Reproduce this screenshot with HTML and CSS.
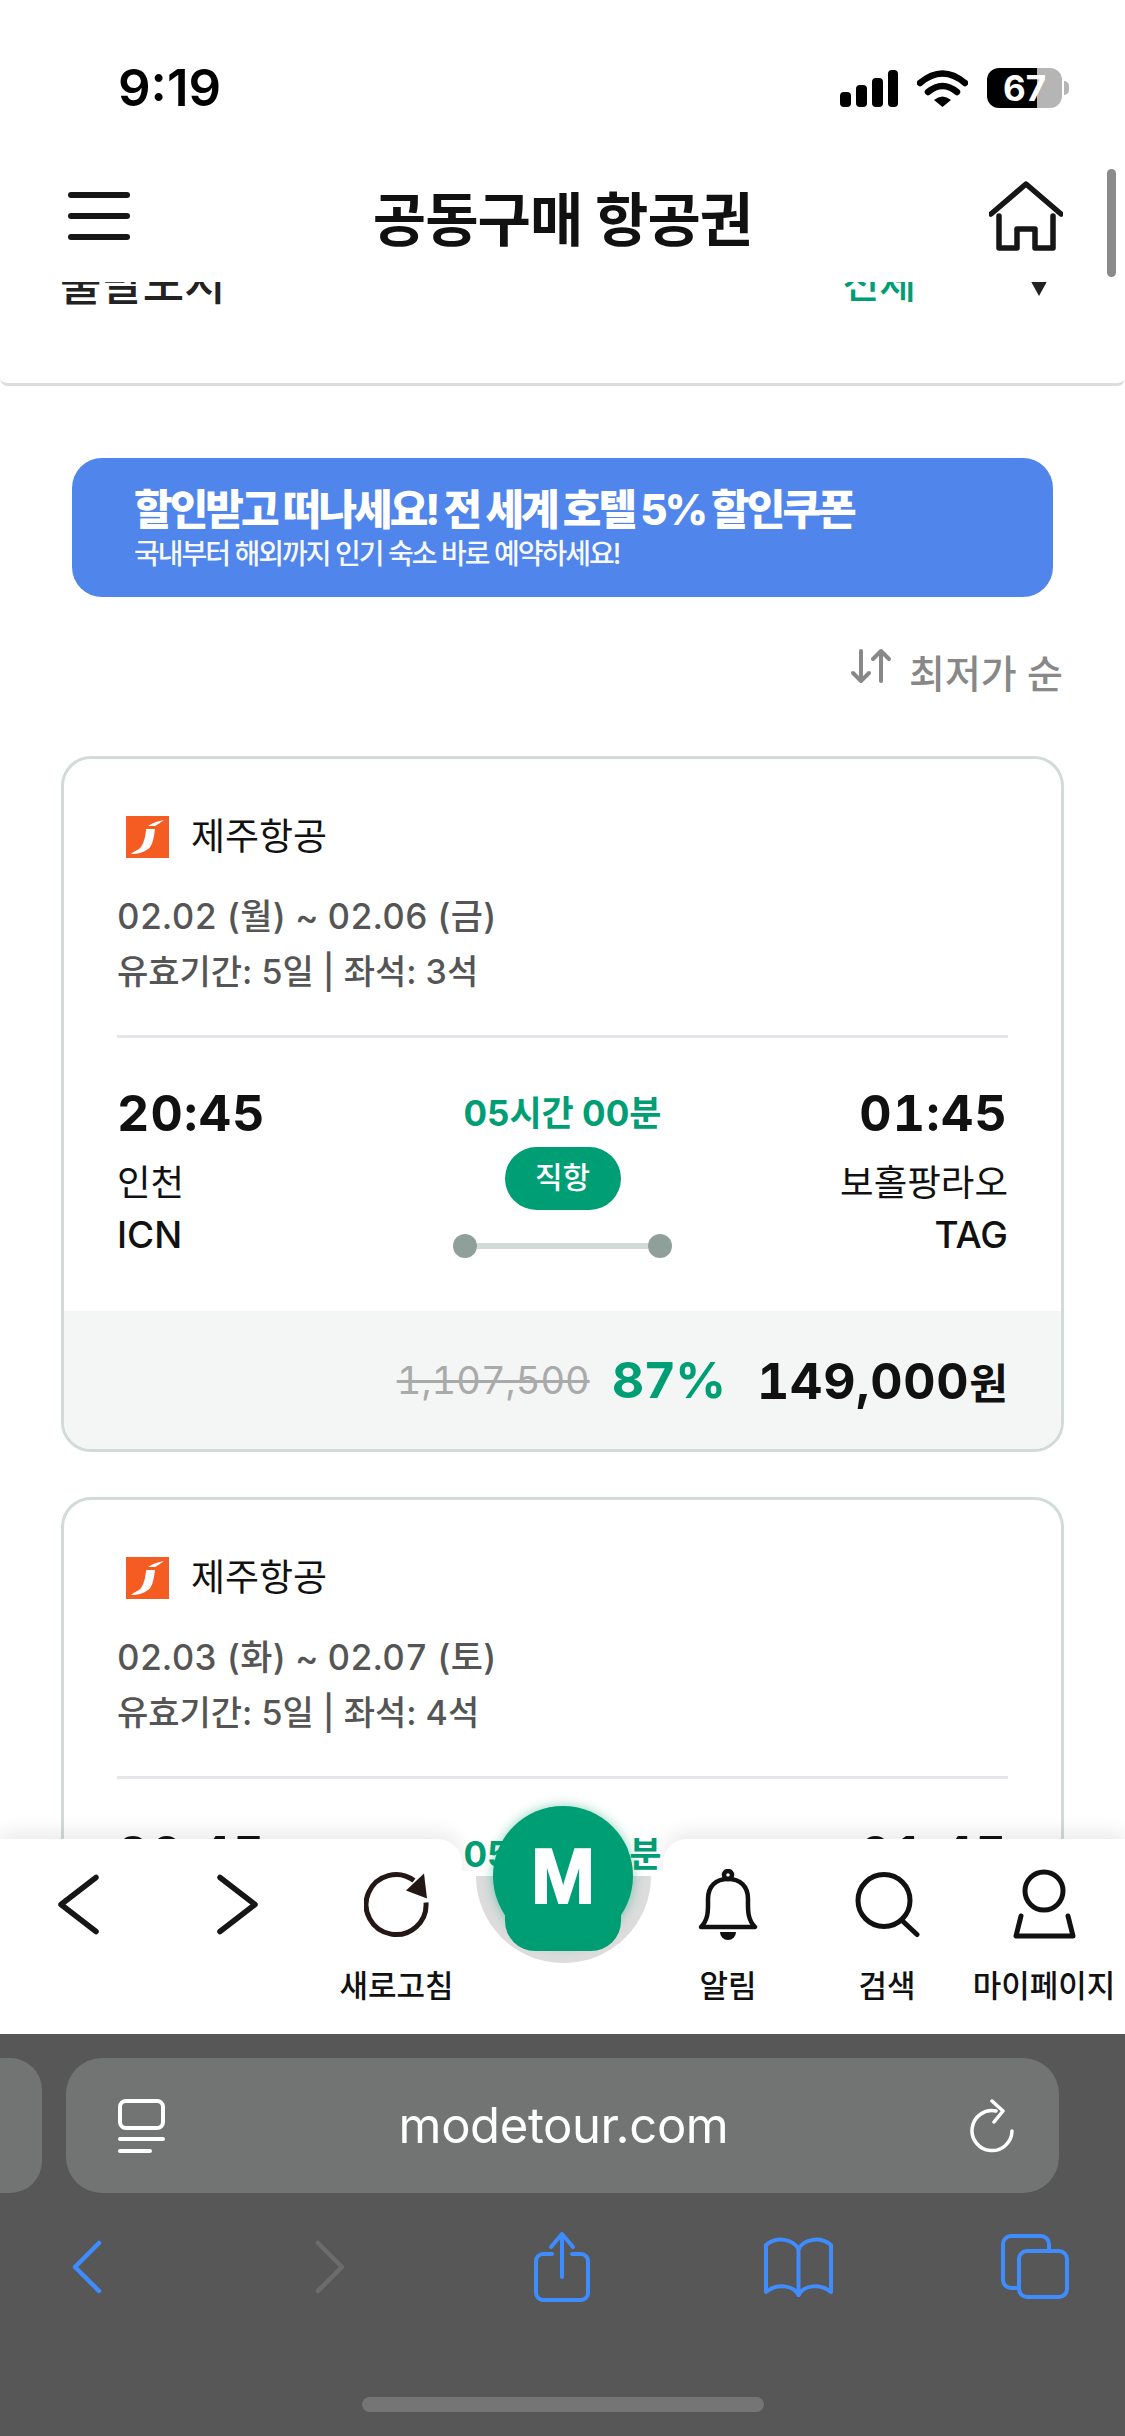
FILE: index.html
```html
<!DOCTYPE html>
<html lang="ko">
<head>
    <meta charset="UTF-8">
    <meta name="viewport" content="width=device-width, initial-scale=1.0">
    <title>공동구매 항공권</title>
    <link rel="stylesheet" href="styles.css">
</head>
<body>
    <div class="screen">
        <div class="page">
            <div class="top-block">
                <!-- Status bar -->
                <div class="status">
                    <span class="status-time">9:19</span>
                    <div class="status-icons">
                        <svg class="signal" width="58" height="37" viewBox="0 0 58 37">
                            <rect x="0" y="22" width="11" height="15" rx="4"/>
                            <rect x="16" y="15" width="11" height="22" rx="4"/>
                            <rect x="32" y="8" width="11" height="29" rx="4"/>
                            <rect x="48" y="0" width="10" height="37" rx="4"/>
                        </svg>
                        <svg class="wifi" width="51" height="37" viewBox="0 0 51 37">
                            <path d="M3 13 Q25.5 -6 48 13" fill="none" stroke="#000" stroke-width="6.5" stroke-linecap="round"/>
                            <path d="M11 22 Q25.5 10 40 22" fill="none" stroke="#000" stroke-width="6.5" stroke-linecap="round"/>
                            <path d="M17 30 Q25.5 23 34 30 L25.5 37 Z"/>
                        </svg>
                        <div class="battery"><span>67</span></div>
                        <div class="battery-cap"></div>
                    </div>
                </div>

                <!-- Header -->
                <header class="header">
                    <div class="burger"><span></span><span></span><span></span></div>
                    <h1>공동구매 항공권</h1>
                    <svg class="home" width="74" height="70" viewBox="0 0 74 70" fill="none" stroke="#161616" stroke-width="5.5" stroke-linecap="round" stroke-linejoin="round">
                        <path d="M2 33 L37 3 L72 33"/>
                        <path d="M10 35 V67 H28 V48 H46 V67 H64 V35"/>
                    </svg>
                </header>

                <!-- Filter row, scrolled mostly under the header -->
                <div class="filter">
                    <div class="filter-row">
                        <span class="filter-label">출발도시</span>
                        <span class="filter-value">전체</span>
                        <span class="filter-arrow"></span>
                    </div>
                </div>
            </div>

            <div class="banner">
                <div class="banner-title">할인받고 떠나세요! 전 세계 호텔 5% 할인쿠폰</div>
                <div class="banner-sub">국내부터 해외까지 인기 숙소 바로 예약하세요!</div>
            </div>

            <div class="sort">
                <svg width="42" height="36" viewBox="0 0 42 36" fill="none" stroke="#888" stroke-width="4" stroke-linecap="round" stroke-linejoin="round">
                    <path d="M11 3 V33 M3 25 L11 33 L19 25"/>
                    <path d="M31 33 V3 M23 11 L31 3 L39 11"/>
                </svg>
                <span>최저가 순</span>
            </div>

            <div class="card">
                <div class="card-info">
                    <div class="airline">
                        <svg class="logo" width="43" height="42" viewBox="0 0 43 42">
                            <rect width="43" height="42" fill="#f55c22"/>
                            <path d="M22 10 C26 7 32 5 38 4 C34 7 31 9 29 10 Z" fill="#fff"/>
                            <path d="M20 13 H29 C28 22 26 31 22 33 C17 37 11 38 5 38 C8 35 13 34 15 31 C18 27 20 18 20 13 Z" fill="#fff"/>
                        </svg>
                        <span>제주항공</span>
                    </div>
                    <div class="date">02.02 (월) ~ 02.06 (금)</div>
                    <div class="valid">유효기간: 5일 | 좌석: 3석</div>
                    <div class="divider"></div>
                    <div class="flight">
                        <div class="side">
                            <div class="time">20:45</div>
                            <div class="city">인천</div>
                            <div class="code">ICN</div>
                        </div>
                        <div class="middle">
                            <div class="duration">05시간 00분</div>
                            <div class="pill">직항</div>
                            <div class="route"><i></i><b></b><i></i></div>
                        </div>
                        <div class="side right">
                            <div class="time">01:45</div>
                            <div class="city">보홀팡라오</div>
                            <div class="code">TAG</div>
                        </div>
                    </div>
                </div>
                <div class="price">
                    <span class="old">1,107,500</span>
                    <span class="rate">87%</span>
                    <span class="now">149,000<small>원</small></span>
                </div>
            </div>

            <div class="card">
                <div class="card-info">
                    <div class="airline">
                        <svg class="logo" width="43" height="42" viewBox="0 0 43 42">
                            <rect width="43" height="42" fill="#f55c22"/>
                            <path d="M22 10 C26 7 32 5 38 4 C34 7 31 9 29 10 Z" fill="#fff"/>
                            <path d="M20 13 H29 C28 22 26 31 22 33 C17 37 11 38 5 38 C8 35 13 34 15 31 C18 27 20 18 20 13 Z" fill="#fff"/>
                        </svg>
                        <span>제주항공</span>
                    </div>
                    <div class="date">02.03 (화) ~ 02.07 (토)</div>
                    <div class="valid">유효기간: 5일 | 좌석: 4석</div>
                    <div class="divider"></div>
                    <div class="flight">
                        <div class="side">
                            <div class="time">20:45</div>
                        </div>
                        <div class="middle">
                            <div class="duration">05시간 00분</div>
                        </div>
                        <div class="side right">
                            <div class="time">01:45</div>
                        </div>
                    </div>
                </div>
            </div>

            <div class="scrollbar"></div>

            <!-- Bottom navigation, floats over the list -->
            <nav class="nav">
                <div class="nav-bg">
                    <div class="nav-panel left"></div>
                    <div class="nav-gap"></div>
                    <div class="nav-panel right"></div>
                </div>
                <div class="nav-items">
                    <div class="nav-item">
                        <svg width="41" height="60" viewBox="0 0 41 60" fill="none" stroke="#161616" stroke-width="5.5" stroke-linecap="round" stroke-linejoin="round"><path d="M38 3 L3 30 L38 57"/></svg>
                    </div>
                    <div class="nav-item">
                        <svg width="41" height="60" viewBox="0 0 41 60" fill="none" stroke="#161616" stroke-width="5.5" stroke-linecap="round" stroke-linejoin="round"><path d="M3 3 L38 30 L3 57"/></svg>
                    </div>
                    <div class="nav-item">
                        <svg width="65" height="66" viewBox="0 0 65 66" fill="none">
                            <path d="M62 31 A30 30 0 1 1 50 9" stroke="#231815" stroke-width="5"/>
                            <path d="M42 19 L60 2 L63 27 Z" fill="#231815"/>
                        </svg>
                        <span>새로고침</span>
                    </div>
                    <div class="nav-main">
                        <div class="nav-ring"></div>
                        <div class="nav-tail"></div>
                        <div class="nav-circle">M</div>
                    </div>
                    <div class="nav-item">
                        <svg width="60" height="71" viewBox="0 0 60 71" fill="none" stroke="#111" stroke-width="4.5" stroke-linejoin="round">
                            <circle cx="30" cy="6" r="4"/>
                            <path d="M3 58 C11 50 10 40 10 30 C10 17 18 10 30 10 C42 10 50 17 50 30 C50 40 49 50 57 58 Z"/>
                            <path d="M22 63 A8 8 0 0 0 38 63 Z" fill="#111" stroke="none"/>
                        </svg>
                        <span>알림</span>
                    </div>
                    <div class="nav-item">
                        <svg width="65" height="66" viewBox="0 0 65 66" fill="none" stroke="#111" stroke-width="5" stroke-linecap="round">
                            <circle cx="29" cy="29" r="26"/>
                            <path d="M47 49 L62 63"/>
                        </svg>
                        <span>검색</span>
                    </div>
                    <div class="nav-item">
                        <svg width="65" height="71" viewBox="0 0 65 71" fill="none" stroke="#111" stroke-width="5" stroke-linejoin="round" stroke-linecap="round">
                            <circle cx="32" cy="22" r="19"/>
                            <path d="M9 47 L4 67 H61 L56 47"/>
                        </svg>
                        <span>마이페이지</span>
                    </div>
                </div>
            </nav>
        </div>

        <!-- Safari chrome -->
        <div class="chrome">
            <div class="url-row">
                <div class="tab-peek"></div>
                <div class="url-bar">
                    <svg width="47" height="54" viewBox="0 0 47 54" fill="none" stroke="#fff" stroke-width="4" stroke-linecap="round">
                        <rect x="2" y="2" width="43" height="27" rx="6"/>
                        <path d="M2 40 H45 M2 52 H32"/>
                    </svg>
                    <span class="url-text">modetour.com</span>
                    <svg width="45" height="54" viewBox="0 0 45 54" fill="none" stroke="#fff" stroke-width="3.5" stroke-linecap="round" stroke-linejoin="round">
                        <path d="M26 12 A20 20 0 1 0 42 32"/>
                        <path d="M22 2 L33 12 L24 23"/>
                    </svg>
                </div>
            </div>
            <div class="tool-row">
                <svg width="30" height="54" viewBox="0 0 30 54" fill="none" stroke="#3f8cff" stroke-width="4.5" stroke-linecap="round" stroke-linejoin="round"><path d="M27 3 L3 27 L27 51"/></svg>
                <svg width="32" height="54" viewBox="0 0 32 54" fill="none" stroke="#6c6c6c" stroke-width="4.5" stroke-linecap="round" stroke-linejoin="round"><path d="M4 3 L28 27 L4 51"/></svg>
                <svg width="56" height="71" viewBox="0 0 56 71" fill="none" stroke="#3f8cff" stroke-width="4" stroke-linecap="round" stroke-linejoin="round">
                    <path d="M18 23 H9 A7 7 0 0 0 2 30 V62 A7 7 0 0 0 9 69 H47 A7 7 0 0 0 54 62 V30 A7 7 0 0 0 47 23 H38"/>
                    <path d="M28 46 V3 M17 16 L28 3 L39 16"/>
                </svg>
                <svg width="71" height="60" viewBox="0 0 71 60" fill="none" stroke="#3f8cff" stroke-width="4" stroke-linecap="round" stroke-linejoin="round">
                    <path d="M35.5 12 C30 2 14 -1 3 8 V55 C14 46 30 48 35.5 58 C41 48 57 46 68 55 V8 C57 -1 41 2 35.5 12 Z"/>
                    <path d="M35.5 12 V58"/>
                </svg>
                <svg width="68" height="65" viewBox="0 0 68 65" fill="none" stroke="#3f8cff" stroke-width="4" stroke-linejoin="round">
                    <path d="M17 54 H10 A8 8 0 0 1 2 46 V10 A8 8 0 0 1 10 2 H40 A8 8 0 0 1 48 10 V16"/>
                    <rect x="18" y="17" width="48" height="46" rx="8"/>
                </svg>
            </div>
            <div class="home-bar"></div>
        </div>
    </div>
</body>
</html>
```

FILE: styles.css
```css
/* Reset */
body, h1 {
    margin: 0;
    padding: 0;
}

body {
    width: 1125px;
    height: 2436px;
    overflow: hidden;
    background-color: #fff;
    color: #111;
    font-family: Inter, "Noto Sans CJK KR", sans-serif;
}

.screen {
    display: flex;
    flex-direction: column;
    height: 2436px;
}

.page {
    position: relative;
    height: 2034px;
    overflow: hidden;
    background-color: #fff;
}

/* Top block: status bar, header, clipped filter */
.top-block {
    height: 383px;
    background-color: #fff;
    border-bottom: 3px solid #dcdcdc;
    border-radius: 0 0 8px 8px;
}

.status {
    display: flex;
    justify-content: space-between;
    align-items: center;
    height: 40px;
    padding: 68px 56px 0 118px;
}

.status-time {
    font-size: 51px;
    font-weight: 600;
    line-height: 40px;
    color: #000;
}

.status-icons {
    display: flex;
    align-items: center;
}

.signal {
    margin-right: 19px;
}

.wifi {
    margin-right: 19px;
}

.battery {
    width: 75px;
    height: 40px;
    border-radius: 12px;
    background: linear-gradient(90deg, #000 66.6%, #b5b5b5 66.6%);
    color: #fff;
    font-size: 35px;
    font-weight: 700;
    line-height: 40px;
    text-align: center;
}

.battery-cap {
    width: 5px;
    height: 14px;
    margin-left: 2px;
    border-radius: 0 5px 5px 0;
    background-color: #b5b5b5;
}

.header {
    display: flex;
    justify-content: space-between;
    align-items: center;
    height: 174px;
    padding: 42px 62px 0 68px;
    box-sizing: border-box;
}

.header h1 {
    margin-left: 6px;
    font-size: 58px;
    font-weight: 700;
    letter-spacing: -1px;
}

.burger {
    display: flex;
    flex-direction: column;
    gap: 15px;
    width: 62px;
}

.burger span {
    height: 6px;
    border-radius: 3px;
    background-color: #161616;
}

.filter {
    height: 101px;
    overflow: hidden;
}

.filter-row {
    display: flex;
    align-items: center;
    height: 48px;
    margin-top: -25px;
    padding: 0 75px 0 60px;
    font-size: 45px;
    font-weight: 500;
}

.filter-label {
    color: #222;
}

.filter-value {
    margin-left: auto;
    color: #009e74;
    font-size: 40px;
}

.filter-arrow {
    width: 0;
    height: 0;
    margin-left: 112px;
    margin-top: 10px;
    border-left: 11px solid transparent;
    border-right: 11px solid transparent;
    border-top: 20px solid #222;
}

/* Coupon banner */
.banner {
    display: flex;
    flex-direction: column;
    height: 139px;
    margin: 72px 72px 0;
    padding: 27px 0 0 62px;
    box-sizing: border-box;
    border-radius: 30px;
    background-color: #5085eb;
    color: #fff;
}

.banner-title {
    font-size: 42px;
    font-weight: 800;
    line-height: 50px;
    letter-spacing: -3px;
}

.banner-sub {
    margin-top: 2px;
    font-size: 28px;
    font-weight: 500;
    line-height: 34px;
    letter-spacing: -2px;
    opacity: .95;
}

.sort {
    display: flex;
    justify-content: flex-end;
    align-items: flex-start;
    gap: 17px;
    height: 44px;
    margin-top: 51px;
    margin-right: 62px;
    color: #888;
    font-size: 39px;
    font-weight: 500;
    line-height: 52px;
}

/* Flight cards */
.card {
    margin: 64px 61px 45px 61px;
    border: 3px solid #d3dbd9;
    border-radius: 30px;
    overflow: hidden;
    background-color: #fff;
}

.card + .card {
    margin-top: 0;
}

.card-info {
    padding: 57px 53px 0;
    height: 552px;
    box-sizing: border-box;
}

.airline {
    display: flex;
    align-items: center;
    height: 42px;
    padding-left: 9px;
    gap: 22px;
    font-size: 37px;
    line-height: 42px;
}

.date {
    margin-top: 36px;
    color: #555;
    font-size: 35px;
    font-weight: 500;
    line-height: 44px;
    font-variant-numeric: tabular-nums;
}

.valid {
    margin-top: 12px;
    color: #555;
    font-size: 34px;
    font-weight: 500;
    line-height: 44px;
}

.divider {
    height: 3px;
    margin-top: 41px;
    background-color: #e6e6ea;
}

.flight {
    display: grid;
    grid-template-columns: 1fr auto 1fr;
    margin-top: 50px;
}

.side.right {
    text-align: right;
}

.time {
    font-size: 50px;
    font-weight: 700;
    line-height: 50px;
    letter-spacing: 1.2px;
    font-variant-numeric: tabular-nums;
}

.city {
    margin-top: 23px;
    font-size: 36.5px;
    line-height: 44px;
}

.code {
    margin-top: 10px;
    font-size: 37px;
    font-weight: 500;
    line-height: 40px;
}

.middle {
    display: flex;
    flex-direction: column;
    align-items: center;
    width: 219px;
}

.duration {
    color: #009e74;
    font-size: 35px;
    font-weight: 700;
    line-height: 50px;
    white-space: nowrap;
}

.pill {
    width: 116px;
    height: 63px;
    margin-top: 9px;
    border-radius: 32px;
    background-color: #009e74;
    color: #fff;
    font-size: 30px;
    font-weight: 500;
    line-height: 60px;
    text-align: center;
}

.route {
    display: flex;
    align-items: center;
    width: 219px;
    margin-top: 24px;
}

.route i {
    width: 24px;
    height: 24px;
    border-radius: 50%;
    background-color: #8fa09b;
}

.route b {
    flex: 1;
    height: 6px;
    background-color: #d3dbd9;
}

.price {
    display: flex;
    justify-content: flex-end;
    align-items: center;
    height: 138px;
    padding-right: 53px;
    background-color: #f4f6f5;
}

.old {
    color: #aaa;
    font-size: 38px;
    text-decoration: line-through;
    font-variant-numeric: tabular-nums;
}

.rate {
    margin-left: 22px;
    color: #009e74;
    font-size: 50px;
    font-weight: 700;
    letter-spacing: 1px;
}

.now {
    margin-left: 30px;
    font-size: 50px;
    font-weight: 700;
    letter-spacing: .7px;
    font-variant-numeric: tabular-nums;
}

.now small {
    font-size: 42px;
    letter-spacing: 0;
}

.scrollbar {
    position: absolute;
    top: 169px;
    right: 9px;
    width: 9px;
    height: 108px;
    border-radius: 5px;
    background-color: #8a8a8a;
}

/* Bottom nav */
.nav {
    position: absolute;
    left: 0;
    right: 0;
    bottom: 0;
    height: 195px;
}

.nav-bg {
    display: flex;
    position: absolute;
    inset: 0;
}

.nav-panel {
    flex: 1;
    background-color: #fff;
    box-shadow: 0 -6px 20px rgba(0, 0, 0, .09);
}

.nav-panel.left {
    border-top-right-radius: 24px;
}

.nav-panel.right {
    border-top-left-radius: 24px;
}

.nav-gap {
    position: relative;
    z-index: 1;
    width: 201px;
    margin-top: 32px;
    background-color: #fff;
}

.nav-items {
    display: grid;
    grid-template-columns: 157px 160px 159px 175px 154px 164px 150px;
    position: relative;
    z-index: 2;
    height: 100%;
}

.nav-item {
    display: flex;
    flex-direction: column;
    align-items: center;
    height: 161px;
    padding-top: 30px;
    box-sizing: border-box;
    position: relative;
    font-size: 31px;
    font-weight: 500;
}

.nav-item svg {
    flex: none;
    height: 71px;
}

.nav-item span {
    position: absolute;
    top: 127px;
    line-height: 40px;
    white-space: nowrap;
}

.nav-main {
    position: relative;
}

.nav-ring {
    position: absolute;
    left: 0;
    top: 37px;
    width: 175px;
    height: 87px;
    border-radius: 0 0 88px 88px;
    background-color: #dcdcdc;
}

.nav-tail {
    position: absolute;
    left: 29px;
    top: 30px;
    width: 116px;
    height: 82px;
    border-radius: 0 0 30px 30px;
    background-color: #009e74;
}

.nav-circle {
    position: absolute;
    left: 17px;
    top: -33px;
    width: 140px;
    height: 140px;
    border-radius: 50%;
    background-color: #009e74;
    box-shadow: 0 0 12px rgba(0, 158, 116, .45);
    color: #fff;
    font-family: "Liberation Sans", sans-serif;
    font-size: 77px;
    font-weight: 700;
    line-height: 140px;
    text-align: center;
    -webkit-text-stroke: 2px #fff;
}

/* Browser chrome */
.chrome {
    position: relative;
    height: 402px;
    background-color: #565756;
}

.url-row {
    display: flex;
    gap: 24px;
    height: 135px;
    padding-top: 24px;
}

.tab-peek {
    width: 42px;
    border-radius: 0 32px 32px 0;
    background-color: #727473;
}

.url-bar {
    display: flex;
    justify-content: space-between;
    align-items: center;
    width: 993px;
    padding: 0 44px 0 52px;
    box-sizing: border-box;
    border-radius: 36px;
    background-color: #727473;
}

.url-text {
    margin-right: 8px;
    color: #fff;
    font-size: 49px;
    letter-spacing: -.4px;
}

.tool-row {
    display: grid;
    grid-template-columns: 242px 220px 229px 238px auto;
    align-items: center;
    height: 71px;
    margin-top: 38px;
    padding-left: 72px;
}

.home-bar {
    position: absolute;
    left: 362px;
    top: 363px;
    width: 402px;
    height: 15px;
    border-radius: 8px;
    background-color: #757575;
}
```
